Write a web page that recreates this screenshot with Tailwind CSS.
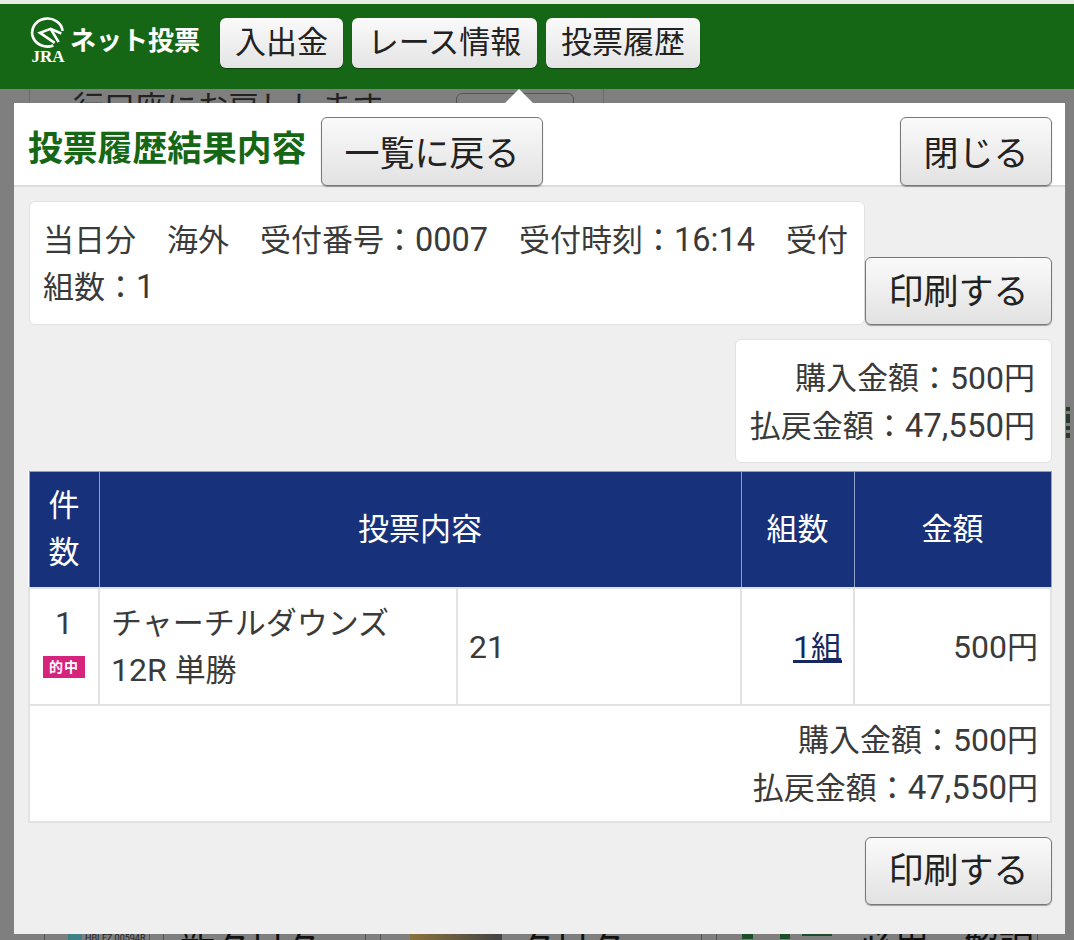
<!DOCTYPE html>
<html lang="ja">
<head>
  <meta charset="UTF-8" />
  <title>投票履歴結果内容</title>
  <script src="https://cdn.jsdelivr.net/npm/@tailwindcss/browser@4"></script>
</head>
<body class="relative w-[1074px] h-[940px] overflow-hidden bg-[#7f7f7f] text-[31px] leading-[47px] text-[#3a3a3a] font-[Roboto,'Noto_Sans_CJK_JP',sans-serif]">

  <!-- dimmed page behind the modal -->
  <div class="absolute left-[29px] top-[89px] w-[575px] h-[15px] overflow-hidden border-x border-[#6c6c6c]">
    <span class="absolute left-[43px] top-[-5px] text-[#222] whitespace-nowrap">行口座にお戻しします</span>
    <span class="absolute left-[426px] top-[4px] w-[118px] h-[30px] rounded-md border border-[#555]"></span>
  </div>
  <div class="absolute left-0 top-[934px] w-[1074px] h-[6px] overflow-hidden text-[35px] text-[#111]">
    <i class="absolute left-[44px] top-0 w-px h-[6px] bg-[#555]"></i>
    <i class="absolute left-[68px] top-0 w-[14px] h-[6px] bg-[#3f7f86]"></i>
    <span class="absolute left-[85px] top-0 text-[9px] leading-[9px] text-[#222]">HBLEZ 00594R</span>
    <i class="absolute left-[149px] top-0 w-px h-[6px] bg-[#555]"></i>
    <i class="absolute left-[163px] top-0 w-px h-[6px] bg-[#555]"></i>
    <span class="absolute left-[180px] top-[-12px] whitespace-nowrap">新々日々</span>
    <i class="absolute left-[365px] top-0 w-px h-[6px] bg-[#555]"></i>
    <i class="absolute left-[380px] top-0 w-px h-[6px] bg-[#555]"></i>
    <i class="absolute left-[410px] top-0 w-[92px] h-[6px] bg-gradient-to-r from-[#8a7238] to-[#444]"></i>
    <span class="absolute left-[520px] top-[-12px] whitespace-nowrap">々日々</span>
    <i class="absolute left-[701px] top-0 w-px h-[6px] bg-[#555]"></i>
    <i class="absolute left-[716px] top-0 w-px h-[6px] bg-[#555]"></i>
    <i class="absolute left-[742px] top-0 w-[11px] h-[5px] bg-[#1c4f2a]"></i>
    <i class="absolute left-[780px] top-0 w-[10px] h-[5px] bg-[#1c4f2a]"></i>
    <i class="absolute left-[802px] top-0 w-[30px] h-[2px] bg-[#1c4f2a]"></i>
    <span class="absolute left-[859px] top-[-12px] whitespace-nowrap">必用・解説</span>
    <i class="absolute left-[1037px] top-0 w-px h-[6px] bg-[#555]"></i>
  </div>
  <div class="absolute left-[1066px] top-[407px] w-[4px] flex flex-col gap-[3px]">
    <i class="h-[4px] bg-[#2b3a2b]"></i>
    <i class="h-[9px] bg-[#2b3a2b]"></i>
    <i class="h-[4px] bg-[#2b3a2b]"></i>
    <i class="h-[5px] bg-[#2b3a2b]"></i>
  </div>

  <!-- top bar -->
  <div class="h-[4px] bg-[#e6eee6]"></div>
  <header class="relative h-[85px] bg-[#156715] flex items-start pt-[13px] pl-[30px]">
    <div class="w-[40px] h-[52px] flex flex-col items-start">
      <svg width="36" height="31" viewBox="30 25 108 92" fill="none" stroke="#fff" stroke-width="8">
        <path d="M128 66 A46 42 0 1 0 100 110" />
        <path d="M124 74 L92 60 L60 72 L104 102" />
        <path d="M92 60 L116 100" />
      </svg>
      <span class="w-[36px] mt-[3px] text-center text-white text-[17px] leading-[12px] font-bold font-['Liberation_Serif',serif]">JRA</span>
    </div>
    <span class="w-[150px] mt-px text-white text-[26px] leading-[46px] font-bold whitespace-nowrap">ネット投票</span>
    <nav class="flex gap-[9px] mt-px text-[#222] text-[31px] leading-[50px]">
      <a class="h-[50px] w-[123px] text-center rounded-md bg-gradient-to-b from-[#fafafa] to-[#e4e4e4] shadow-[0_1px_1px_#0006]">入出金</a>
      <a class="h-[50px] w-[185px] text-center rounded-md bg-gradient-to-b from-[#fafafa] to-[#e4e4e4] shadow-[0_1px_1px_#0006]">レース情報</a>
      <a class="h-[50px] w-[154px] text-center rounded-md bg-gradient-to-b from-[#fafafa] to-[#e4e4e4] shadow-[0_1px_1px_#0006]">投票履歴</a>
    </nav>
  </header>

  <!-- modal -->
  <div class="absolute left-[14px] top-[103px] w-[1051px] h-[831px] bg-[#efefef]">
    <div class="absolute left-[491px] top-[-14px] w-0 h-0 border-x-[14px] border-x-transparent border-b-[14px] border-b-white"></div>

    <div class="h-[84px] bg-white border-b-2 border-[#dddddd] flex items-start pl-[15px] pr-[13px] pt-[14px]">
      <h1 class="w-[292px] text-[34.8px] leading-[64px] -ml-px mr-px font-bold text-[#156715] whitespace-nowrap">投票履歴結果内容</h1>
      <button class="w-[222px] h-[69px] pt-[6px] rounded-md border border-[#777] bg-gradient-to-b from-[#fafafa] to-[#e2e2e2] text-[35px] text-[#222] shadow-[0_1px_1px_#0005]">一覧に戻る</button>
      <button class="ml-auto w-[152px] h-[69px] pt-[6px] rounded-md border border-[#777] bg-gradient-to-b from-[#fafafa] to-[#e2e2e2] text-[35px] text-[#222] shadow-[0_1px_1px_#0005]">閉じる</button>
    </div>

    <div class="pl-[15px] pr-[13px] pt-[14px]">
      <div class="flex items-end">
        <div class="w-[836px] h-[124px] shrink-0 rounded-md bg-white border border-[#e2e2e2] pl-[13px] pr-[10px] pt-[15px]">当日分　海外　受付番号：<span class="text-[32.5px]">0007</span>　受付時刻：<span class="text-[32.5px]">16:14</span>　受付組数：<span class="text-[32.5px]">1</span></div>
        <button class="w-[187px] h-[68px] pt-[2px] shrink-0 rounded-md border border-[#777] bg-gradient-to-b from-[#fafafa] to-[#e2e2e2] text-[35px] text-[#222] shadow-[0_1px_1px_#0005]">印刷する</button>
      </div>

      <div class="flex justify-end mt-[14px]">
        <div class="w-[317px] h-[124px] rounded-md bg-white border border-[#e2e2e2] pr-[16px] pt-[15px] text-right">購入金額：<span class="text-[32px]">500</span>円<br />払戻金額：<span class="text-[33px]">47,550</span>円</div>
      </div>

      <table class="mt-[8px] -ml-px w-[1022px] table-fixed border-collapse bg-white">
        <colgroup>
          <col class="w-[70px]" /><col class="w-[358px]" /><col class="w-[284px]" /><col class="w-[113px]" /><col class="w-[197px]" />
        </colgroup>
        <thead>
          <tr class="h-[116px] bg-[#17317a] text-white text-center">
            <th class="font-normal border border-[#8ea0c8] px-[18px]">件数</th>
            <th colspan="2" class="font-normal border border-[#8ea0c8]">投票内容</th>
            <th class="font-normal border border-[#8ea0c8]">組数</th>
            <th class="font-normal border border-[#8ea0c8]">金額</th>
          </tr>
        </thead>
        <tbody>
          <tr class="h-[117px]">
            <td class="border-2 border-[#e2e2e2] text-center align-top pt-[11px]">
              <span class="text-[32px]">1</span>
              <div class="mx-auto mt-[9px] w-[42px] h-[22px] bg-[#d6237c] text-white text-[14px] leading-[22px] font-bold tracking-[1px]">的中</div>
            </td>
            <td class="border-2 border-[#e2e2e2] pl-[11px] pt-[2px] whitespace-nowrap">チャーチルダウンズ<br /><span class="text-[32px]">12R </span>単勝</td>
            <td class="border-2 border-[#e2e2e2] pl-[11px] pt-[2px]"><span class="text-[32px]">21</span></td>
            <td class="border-2 border-[#e2e2e2] pr-[11px] pt-[2px] text-right"><a class="underline text-[#17285f]"><span class="text-[32px]">1</span>組</a></td>
            <td class="border-2 border-[#e2e2e2] pr-[12px] pt-[2px] text-right"><span class="text-[32px]">500</span>円</td>
          </tr>
          <tr class="h-[117px]">
            <td colspan="5" class="border-2 border-[#e2e2e2] pr-[12px] pt-[3px] text-right">購入金額：<span class="text-[32px]">500</span>円<br />払戻金額：<span class="text-[33px]">47,550</span>円</td>
          </tr>
        </tbody>
      </table>

      <div class="flex justify-end mt-[14px]">
        <button class="w-[187px] h-[68px] pt-[2px] rounded-md border border-[#777] bg-gradient-to-b from-[#fafafa] to-[#e2e2e2] text-[35px] text-[#222] shadow-[0_1px_1px_#0005]">印刷する</button>
      </div>
    </div>
  </div>
</body>
</html>
